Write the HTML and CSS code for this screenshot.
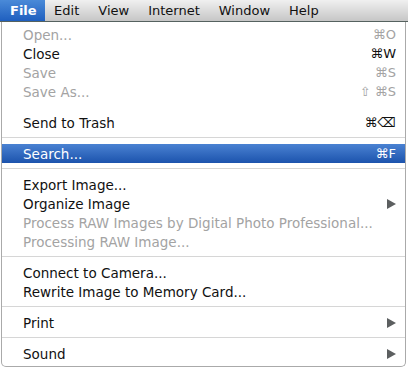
FILE: index.html
```html
<!DOCTYPE html>
<html lang="en">
<head>
  <meta charset="UTF-8" />
  <title>File menu</title>
  <link rel="stylesheet" href="styles.css">
</head>
<body>
  <div class="menubar">
    <span class="top active">File</span>
    <span class="top">Edit</span>
    <span class="top">View</span>
    <span class="top">Internet</span>
    <span class="top">Window</span>
    <span class="top">Help</span>
  </div>

  <div class="menu">
    <div class="item off"><span>Open...</span><span class="key">⌘O</span></div>
    <div class="item"><span>Close</span><span class="key">⌘W</span></div>
    <div class="item off"><span>Save</span><span class="key">⌘S</span></div>
    <div class="item off"><span>Save As...</span><span class="key">⇧ ⌘S</span></div>
    <div class="sep blank"></div>
    <div class="item"><span>Send to Trash</span><span class="key">⌘⌫</span></div>
    <div class="sep"></div>
    <div class="item hot"><span>Search...</span><span class="key">⌘F</span></div>
    <div class="sep"></div>
    <div class="item"><span>Export Image...</span></div>
    <div class="item"><span>Organize Image</span><span class="arrow"></span></div>
    <div class="item off"><span>Process RAW Images by Digital Photo Professional...</span></div>
    <div class="item off"><span>Processing RAW Image...</span></div>
    <div class="sep"></div>
    <div class="item"><span>Connect to Camera...</span></div>
    <div class="item"><span>Rewrite Image to Memory Card...</span></div>
    <div class="sep"></div>
    <div class="item"><span>Print</span><span class="arrow"></span></div>
    <div class="sep"></div>
    <div class="item"><span>Sound</span><span class="arrow"></span></div>
  </div>
</body>
</html>
```

FILE: styles.css
```css
* {
  box-sizing: border-box;
}
body {
  margin: 0;
  background: #fff;
  font-family: 'DejaVu Sans', sans-serif;
  color: #111;
}
.menubar {
  display: flex;
  height: 22px;
  background: linear-gradient(#f0f0f0, #c6c6c6);
  border-bottom: 1px solid #55625f;
}
.top {
  font-size: 13px;
  line-height: 21px;
  padding: 0 9.5px;
  color: #111;
}
.top.active {
  background: linear-gradient(#4a8ad8, #1f5fbf);
  color: #fff;
  font-weight: bold;
  padding: 0 8px 0 10px;
}
.menu {
  margin-left: 1px;
  width: 405px;
  border: 1px solid #aaaaaa;
  border-top: none;
  border-radius: 0 0 5px 5px;
  background: #fff;
  padding: 3px 0 3px;
}
.sep {
  height: 12px;
  padding-top: 5px;
}
.sep::before {
  content: "";
  display: block;
  height: 1px;
  background: #d6d6d6;
}
.sep.blank::before {
  background: transparent;
}
.item {
  display: flex;
  align-items: center;
  justify-content: space-between;
  height: 19px;
  padding: 0 9px 0 21px;
  font-size: 13.5px;
}
.item.off {
  color: #a3a3a3;
}
.item.hot {
  background: linear-gradient(#4a82d2, #1c53ad);
  color: #fff;
}
.key {
  font-size: 13px;
}
.arrow {
  width: 0;
  height: 0;
  border-top: 5px solid transparent;
  border-bottom: 5px solid transparent;
  border-left: 9px solid #5c5f60;
}
```
